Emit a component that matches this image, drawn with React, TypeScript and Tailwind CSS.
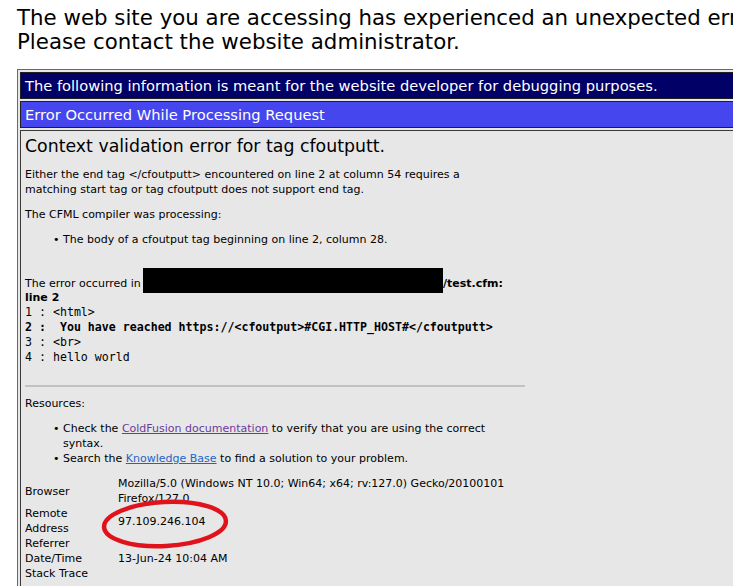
const rows: { label: string[]; value: string[] }[] = [
    { label: ['Browser'], value: ['Mozilla/5.0 (Windows NT 10.0; Win64; x64; rv:127.0) Gecko/20100101', 'Firefox/127.0'] },
    { label: ['Remote', 'Address'], value: ['97.109.246.104'] },
    { label: ['Referrer'], value: [''] },
    { label: ['Date/Time'], value: ['13-Jun-24 10:04 AM'] },
    { label: ['Stack Trace'], value: [''] },
]

const code = [
    { n: '1', text: '<html>', bold: false },
    { n: '2', text: ' You have reached https://<cfoutput>#CGI.HTTP_HOST#</cfoutputt>', bold: true },
    { n: '3', text: '<br>', bold: false },
    { n: '4', text: 'hello world', bold: false },
]

function Bullet({ children }: { children: React.ReactNode }) {
    return (
        <div className="flex pl-[28px]">
            <span className="w-[10px] shrink-0">•</span>
            <span className="whitespace-nowrap">{children}</span>
        </div>
    )
}

export default function App() {
    return (
        <div className="relative h-[586px] w-[733px] overflow-hidden bg-white font-['DejaVu_Sans',sans-serif] text-black">
            <div className="pl-[17px] pt-[6px]">
                <p className="whitespace-nowrap text-[21.33px] leading-[24px]">
                    The web site you are accessing has experienced an unexpected error.
                    <br />
                    Please contact the website administrator.
                </p>

                <div className="mt-[15px] flex w-[820px] flex-col gap-[2px] border border-[#6a6a6a] bg-[#e7e7e7] p-[2px]">
                    <div className="h-[27px] border border-[#202020] bg-[#000066] px-[4px] text-[14.67px] leading-[25px] whitespace-nowrap text-white">
                        The following information is meant for the website developer for debugging purposes.
                    </div>
                    <div className="h-[27px] border border-[#202020] bg-[#4646ee] px-[4px] text-[14.67px] leading-[25px] whitespace-nowrap text-white">
                        Error Occurred While Processing Request
                    </div>

                    <div className="h-[500px] border border-[#3a3a3a] bg-[#e7e7e7] px-[4px] pt-[5px]">
                        <div className="w-[500px] text-[11px] leading-[15px]">
                            <h1 className="text-[17.33px] leading-[20px] font-normal">
                                Context validation error for tag cfoutputt.
                            </h1>

                            <p className="mt-[11px] whitespace-nowrap">
                                Either the end tag &lt;/cfoutputt&gt; encountered on line 2 at column 54 requires a
                                <br />
                                matching start tag or tag cfoutputt does not support end tag.
                            </p>

                            <p className="mt-[10px]">The CFML compiler was processing:</p>

                            <div className="mt-[10px]">
                                <Bullet>The body of a cfoutput tag beginning on line 2, column 28.</Bullet>
                            </div>

                            <div className="relative mt-[30px] flex leading-[14px] whitespace-nowrap">
                                <span className="w-[418px] shrink-0">The error occurred in</span>
                                <b>/test.cfm:</b>
                                <div className="absolute top-[-9px] left-[118px] h-[25px] w-[300px] bg-black" />
                            </div>
                            <p className="leading-[14px] font-bold">line 2</p>

                            <div className="font-['DejaVu_Sans_Mono',monospace] text-[11.6px] leading-[15px] whitespace-pre">
                                {code.map((line) => (
                                    <div key={line.n} className={line.bold ? 'font-bold' : ''}>
                                        {line.n} : {line.text}
                                    </div>
                                ))}
                            </div>

                            <div className="mt-[20px] h-[2px] w-[500px] bg-[#c2c2c2]" />

                            <p className="mt-[9px]">Resources:</p>

                            <div className="mt-[10px]">
                                <Bullet>
                                    Check the{' '}
                                    <a href="#" className="text-[#6a3b9c] underline">
                                        ColdFusion documentation
                                    </a>{' '}
                                    to verify that you are using the correct
                                    <br />
                                    syntax.
                                </Bullet>
                                <Bullet>
                                    Search the{' '}
                                    <a href="#" className="text-[#1e64c8] underline">
                                        Knowledge Base
                                    </a>{' '}
                                    to find a solution to your problem.
                                </Bullet>
                            </div>

                            <div className="mt-[10px] grid grid-cols-[93px_1fr]">
                                {rows.map((row) => (
                                    <div key={row.label[0]} className="contents">
                                        <div className="flex flex-col justify-center">
                                            {row.label.map((l) => (
                                                <span key={l}>{l}</span>
                                            ))}
                                        </div>
                                        <div className="flex flex-col justify-center whitespace-nowrap">
                                            {row.value.map((v, i) => (
                                                <span key={i}>{v || '\u00a0'}</span>
                                            ))}
                                        </div>
                                    </div>
                                ))}
                            </div>
                        </div>
                    </div>
                </div>
            </div>

            <svg
                className="pointer-events-none absolute top-[497px] left-[99px]"
                width="134"
                height="54"
                viewBox="0 0 134 54"
            >
                <ellipse
                    cx="66"
                    cy="27"
                    rx="61"
                    ry="22"
                    fill="none"
                    stroke="#e0121c"
                    strokeWidth="4.5"
                    transform="rotate(-3 66 27)"
                />
            </svg>
        </div>
    )
}
